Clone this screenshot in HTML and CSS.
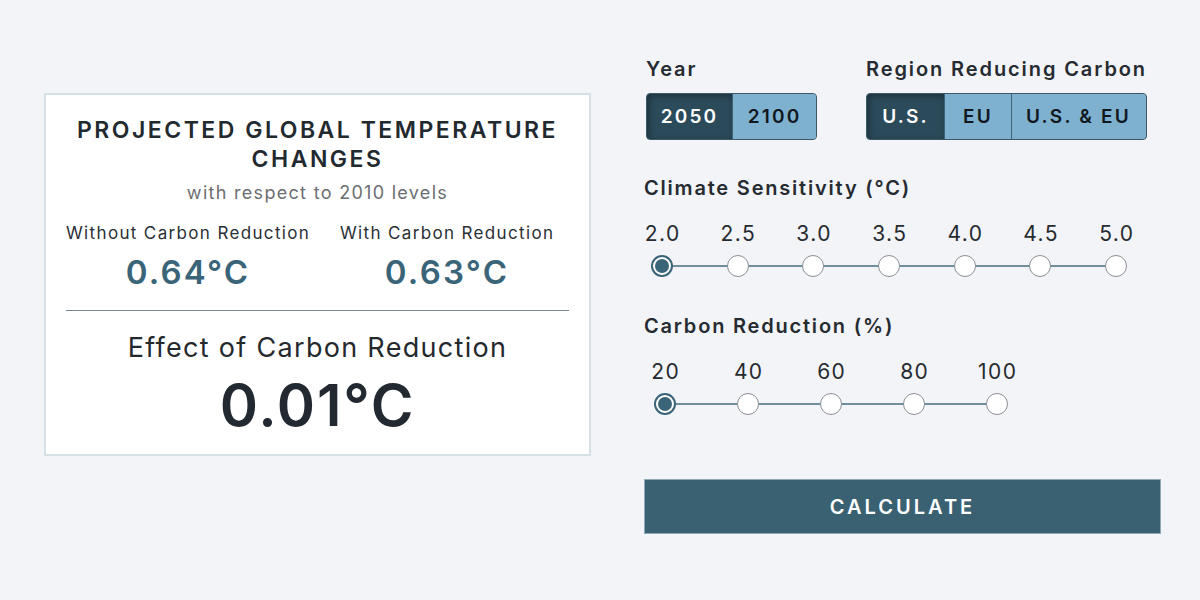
FILE: index.html
```html
<!DOCTYPE html>
<html lang="en">
<head>
<meta charset="utf-8">
<title>Projected Global Temperature Changes</title>
<link rel="stylesheet" href="styles.css">
</head>
<body>
<main class="page">
  <section class="card">
    <h1 class="card-title">PROJECTED GLOBAL TEMPERATURE CHANGES</h1>
    <p class="card-sub">with respect to 2010 levels</p>
    <div class="compare">
      <div class="compare-item item-without">
        <div class="compare-label">Without Carbon Reduction</div>
        <div class="compare-value">0.64°C</div>
      </div>
      <div class="compare-item item-with">
        <div class="compare-label">With Carbon Reduction</div>
        <div class="compare-value">0.63°C</div>
      </div>
    </div>
    <hr class="divider">
    <div class="effect-label">Effect of Carbon Reduction</div>
    <div class="effect-value">0.01°C</div>
  </section>

  <section class="controls">
    <div class="toggle-row">
      <div class="field">
        <div class="field-label">Year</div>
        <div class="seg seg-year">
          <button class="seg-btn active">2050</button>
          <button class="seg-btn">2100</button>
        </div>
      </div>
      <div class="field">
        <div class="field-label">Region Reducing Carbon</div>
        <div class="seg seg-region">
          <button class="seg-btn active w-us">U.S.</button>
          <button class="seg-btn w-eu">EU</button>
          <button class="seg-btn w-both">U.S. &amp; EU</button>
        </div>
      </div>
    </div>

    <div class="field field-sens">
      <div class="field-label">Climate Sensitivity (°C)</div>
      <div class="radios radios-sens">
        <div class="opt"><span class="opt-text">2.0</span><span class="dot checked"></span></div>
        <div class="opt"><span class="opt-text">2.5</span><span class="dot"></span></div>
        <div class="opt"><span class="opt-text">3.0</span><span class="dot"></span></div>
        <div class="opt"><span class="opt-text">3.5</span><span class="dot"></span></div>
        <div class="opt"><span class="opt-text">4.0</span><span class="dot"></span></div>
        <div class="opt"><span class="opt-text">4.5</span><span class="dot"></span></div>
        <div class="opt"><span class="opt-text">5.0</span><span class="dot"></span></div>
      </div>
    </div>

    <div class="field field-carbon">
      <div class="field-label">Carbon Reduction (%)</div>
      <div class="radios radios-carbon">
        <div class="opt"><span class="opt-text">20</span><span class="dot checked"></span></div>
        <div class="opt"><span class="opt-text">40</span><span class="dot"></span></div>
        <div class="opt"><span class="opt-text">60</span><span class="dot"></span></div>
        <div class="opt"><span class="opt-text">80</span><span class="dot"></span></div>
        <div class="opt"><span class="opt-text">100</span><span class="dot"></span></div>
      </div>
    </div>

    <button class="calc">CALCULATE</button>
  </section>
</main>
</body>
</html>
```

FILE: styles.css
```css
* { box-sizing: border-box; }
html, body { margin: 0; padding: 0; }
body {
  width: 1200px;
  height: 600px;
  background: #f3f4f8;
  font-family: "Inter", "Noto Sans", sans-serif;
  color: #1f2a33;
  overflow: hidden;
}
.page {
  display: flex;
  align-items: flex-start;
  padding: 56px 0 0 44px;
}

/* card */
.card {
  margin-top: 37px;
  width: 547px;
  height: 363px;
  background: #fff;
  border: 2px solid #d5e0e7;
  padding: 21px 20px 0 20px;
  text-align: center;
}
.card-title {
  margin: 0;
  font-size: 23px;
  line-height: 29px;
  font-weight: 600;
  letter-spacing: 2.5px;
  color: #22292f;
  padding: 0 6px;
}
.card-sub {
  margin: 7px 0 0;
  font-size: 18px;
  line-height: 24px;
  color: #6b6e72;
  letter-spacing: 1.3px;
}
.compare {
  display: flex;
  gap: 30px;
  margin-top: 17px;
}
.item-without { width: 244px; }
.item-with { width: 214px; }
.compare-label {
  font-size: 17px;
  line-height: 22px;
  color: #2a2f35;
  letter-spacing: 1.35px;
  white-space: nowrap;
}
.compare-value {
  margin-top: 8px;
  font-size: 33px;
  line-height: 40px;
  font-weight: 600;
  color: #3a6478;
  letter-spacing: 2.2px;
}
.divider {
  margin: 18px 0 0;
  border: 0;
  border-top: 1px solid #7a8690;
  height: 0;
}
.effect-label {
  margin-top: 20px;
  font-size: 27px;
  line-height: 34px;
  color: #25292e;
  letter-spacing: 1.3px;
}
.effect-value {
  margin-top: 7px;
  font-size: 58px;
  line-height: 66px;
  font-weight: 600;
  color: #222931;
  letter-spacing: 1.8px;
}

/* controls */
.controls {
  margin-left: 53px;
  width: 517px;
  display: flex;
  flex-direction: column;
}
.toggle-row {
  display: flex;
  gap: 49px;
  padding-left: 2px;
}
.field-label {
  font-size: 20px;
  line-height: 26px;
  font-weight: 600;
  color: #252b31;
  letter-spacing: 1.8px;
  white-space: nowrap;
}
.toggle-row .field-label { letter-spacing: 1.9px; }
.seg {
  margin-top: 11px;
  display: flex;
  height: 47px;
  border: 1px solid #3c5866;
  border-radius: 4px;
  overflow: hidden;
  background: #7eb1cf;
}
.seg-btn {
  border: 0;
  margin: 0;
  padding: 0;
  font-family: inherit;
  font-size: 19px;
  font-weight: 600;
  letter-spacing: 2.2px;
  color: #10181e;
  background: #7eb1cf;
  display: flex;
  align-items: center;
  justify-content: center;
}
.seg-btn + .seg-btn { border-left: 1px solid #3f6274; }
.seg-btn.active {
  background: #2b4a5a;
  color: #fff;
  box-shadow: inset 2px 2px 6px rgba(0,0,0,0.35);
}
.seg-year .seg-btn { width: 85px; }
.seg-year .seg-btn + .seg-btn { width: 84px; }
.w-us { width: 77px; }
.w-eu { width: 67px; }
.w-both { width: 134px; }

.field-sens { margin-top: 35px; }
.field-carbon { margin-top: 36px; }

.radios {
  position: relative;
  display: flex;
  margin-top: 20px;
}
.radios::before {
  content: "";
  position: absolute;
  left: 20px;
  height: 2px;
  bottom: 10px;
  background: #6f8e9c;
}
.radios-sens { gap: 35.7px; margin-left: -2px; }
.radios-sens::before { width: 454px; }
.radios-carbon { gap: 43px; margin-left: 1px; }
.radios-carbon::before { width: 332px; }
.opt {
  width: 40px;
  display: flex;
  flex-direction: column;
  align-items: center;
  position: relative;
}
.opt-text {
  font-size: 21px;
  line-height: 26px;
  color: #262b30;
  letter-spacing: 1.4px;
  white-space: nowrap;
  margin-right: -1.4px;
}
.dot {
  margin-top: 8px;
  width: 22px;
  height: 22px;
  border-radius: 50%;
  border: 1.5px solid #8a8f94;
  background: #fff;
  position: relative;
}
.dot.checked {
  border: 2px solid #3a6478;
  background: #fff;
}
.dot.checked::after {
  content: "";
  position: absolute;
  left: 2px; top: 2px;
  width: 14px; height: 14px;
  border-radius: 50%;
  background: #3a6478;
}

.calc {
  margin-top: 64px;
  width: 517px;
  height: 55px;
  border: 1px solid #8fa9b6;
  background: #3a6172;
  color: #fff;
  font-family: inherit;
  font-size: 20px;
  font-weight: 600;
  letter-spacing: 3px;
}
```
